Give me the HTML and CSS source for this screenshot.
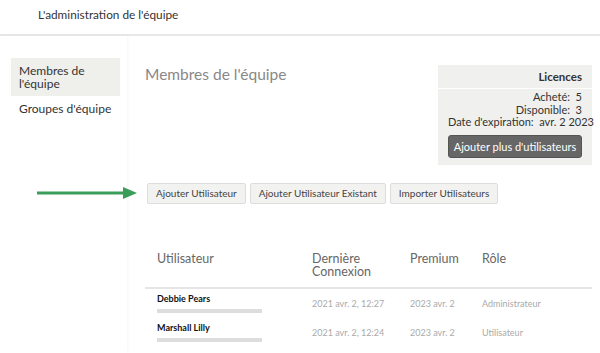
FILE: index.html
```html
<!DOCTYPE html>
<html lang="fr">
<head>
  <meta charset="UTF-8">
  <title>Équipe</title>
  <link rel="stylesheet" href="styles.css">
</head>
<body>
  <div class="topbar">L'administration de l'équipe</div>

  <div class="layout">
    <div class="sidebar">
      <div class="side-item active">Membres de l'équipe</div>
      <div class="side-item">Groupes d'équipe</div>
    </div>

    <div class="main">
      <div class="main-top">
        <h2 class="title">Membres de l'équipe</h2>
        <div class="licences">
          <div class="lic-head">Licences</div>
          <div class="lic-body">
            <div>Acheté:&nbsp; 5</div>
            <div>Disponible:&nbsp; 3</div>
            <div>Date d'expiration:&nbsp; avr. 2 2023</div>
            <button class="dark-btn">Ajouter plus d'utilisateurs</button>
          </div>
        </div>
      </div>

      <div class="actions">
        <svg class="arrow" width="100" height="12" viewBox="0 0 100 12">
          <line x1="0" y1="6" x2="88" y2="6" stroke="#3a9d5a" stroke-width="3"/>
          <polygon points="86,0 100,6 86,12" fill="#3a9d5a"/>
        </svg>
        <button class="btn">Ajouter Utilisateur</button>
        <button class="btn">Ajouter Utilisateur Existant</button>
        <button class="btn">Importer Utilisateurs</button>
      </div>

      <table class="members">
        <thead>
          <tr>
            <th class="c-user">Utilisateur</th>
            <th class="c-last">Dernière Connexion</th>
            <th class="c-prem">Premium</th>
            <th>Rôle</th>
          </tr>
        </thead>
        <tbody>
          <tr>
            <td><div class="name">Debbie Pears</div><div class="email"></div></td>
            <td class="muted">2021 avr. 2, 12:27</td>
            <td class="muted">2023 avr. 2</td>
            <td class="muted">Administrateur</td>
          </tr>
          <tr>
            <td><div class="name">Marshall Lilly</div><div class="email"></div></td>
            <td class="muted">2021 avr. 2, 12:24</td>
            <td class="muted">2023 avr. 2</td>
            <td class="muted">Utilisateur</td>
          </tr>
        </tbody>
      </table>
    </div>
  </div>
</body>
</html>
```

FILE: styles.css
```css
body {
  margin: 0;
  font-family: Lato, "Open Sans", sans-serif;
  color: #333;
  background: #fff;
  overflow: hidden;
}
.topbar {
  height: 34px;
  padding-left: 38px;
  font-size: 11.8px;
  line-height: 29px;
  border-bottom: 2px solid #e8e8e8;
}
.layout {
  display: flex;
  height: 317px;
}
.sidebar {
  width: 127px;
  flex-shrink: 0;
  padding-top: 22px;
  box-shadow: 1px 0 3px rgba(0,0,0,0.04);
  box-sizing: border-box;
}
.side-item {
  margin-left: 11px;
  width: 109px;
  padding: 6px 8px;
  font-size: 12px;
  line-height: 13px;
  white-space: nowrap;
  box-sizing: border-box;
}
.side-item.active {
  background: #efefec;
  white-space: normal;
  padding-right: 25px;
}
.main {
  flex: 1;
  padding: 0 8px 0 18px;
}
.main-top {
  display: flex;
  justify-content: space-between;
  align-items: flex-start;
  margin-top: 29px;
}
.title {
  margin: 0;
  font-size: 15.5px;
  font-weight: normal;
  color: #888;
}
.licences {
  width: 154px;
  background: #f0f0ee;
  font-size: 11px;
  text-align: right;
  white-space: nowrap;
}
.lic-head {
  font-weight: bold;
  font-size: 11.5px;
  padding: 5px 10px 5px;
  border-bottom: 1px solid #fff;
}
.lic-body {
  padding: 2px 10px 7px;
  line-height: 12.5px;
}
.dark-btn {
  margin-top: 6px;
  width: 134px;
  height: 23px;
  background: #666;
  color: #fff;
  border: 1px solid #555;
  border-radius: 3px;
  font-family: inherit;
  font-size: 11px;
  padding: 0;
}
.actions {
  display: flex;
  align-items: center;
  gap: 4px;
  margin-top: 18px;
  margin-left: -108px;
}
.arrow {
  margin-right: 6px;
}
.btn {
  height: 21px;
  padding: 0 8px;
  background: #f2f2f1;
  border: 1px solid #ddd;
  border-radius: 2px;
  font-family: inherit;
  font-size: 10px;
  color: #444;
}
.members {
  width: 100%;
  margin-top: 46px;
  border-collapse: collapse;
}
.members th {
  text-align: left;
  font-weight: normal;
  font-size: 12.5px;
  line-height: 13px;
  color: #666;
  padding: 2px 0 9px 12px;
  vertical-align: top;
  border-bottom: 2px solid #e5e5e5;
}
.members th.c-user { width: 143px; }
.members th.c-last { width: 86px; }
.members th.c-prem { width: 60px; }
.members td {
  padding: 3px 0 5px 12px;
  vertical-align: middle;
}
.name {
  font-weight: bold;
  font-size: 9px;
  color: #111;
  line-height: 13px;
}
.email {
  margin-top: 4px;
  width: 105px;
  height: 4px;
  background: #ddd;
}
.muted {
  font-size: 9px;
  color: #aaa;
  padding-top: 5px !important;
}
```
